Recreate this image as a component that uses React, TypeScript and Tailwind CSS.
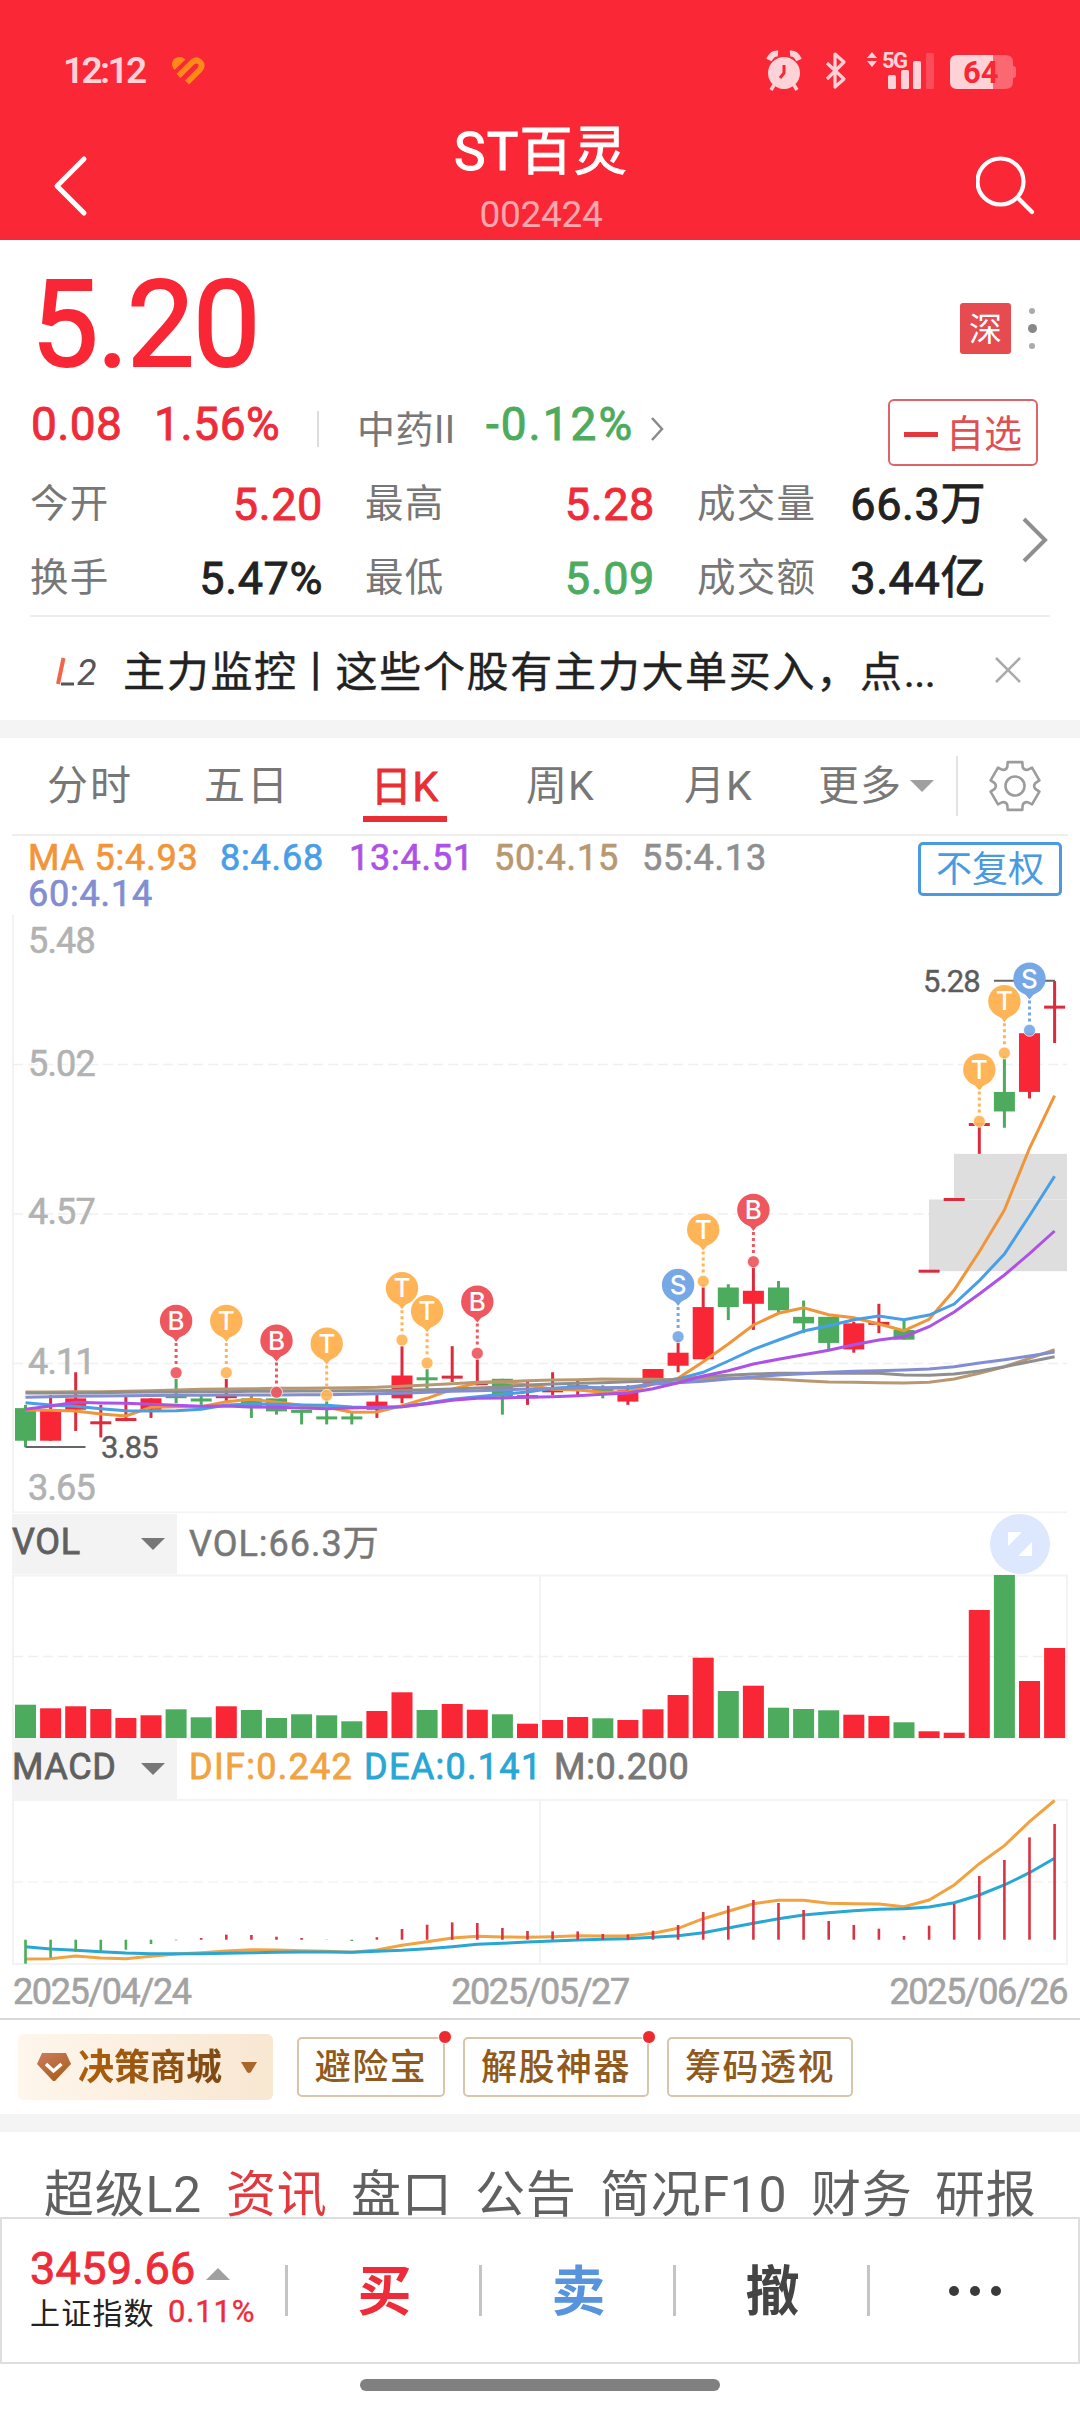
import type { ReactNode } from "react";

const UP = "#f92735";
const DOWN = "#4dab5e";

// high, body top, body bottom, low, "u" | "d"
type Candle = [number, number, number, number, "u" | "d"];

const candles: Candle[] = [
  [3.98, 3.97, 3.87, 3.85, "d"],
  [4.01, 3.965, 3.87, 3.87, "u"],
  [4.08, 4.0, 3.965, 3.9, "u"],
  [3.98, 3.925, 3.925, 3.88, "u"],
  [4.01, 3.935, 3.935, 3.93, "u"],
  [4.0, 4.0, 3.965, 3.94, "u"],
  [4.06, 4.005, 4.005, 3.985, "d"],
  [4.01, 3.995, 3.995, 3.98, "d"],
  [4.06, 4.005, 4.005, 3.99, "u"],
  [4.01, 4.0, 3.97, 3.94, "d"],
  [4.0, 4.0, 3.96, 3.95, "d"],
  [3.965, 3.96, 3.96, 3.92, "d"],
  [4.0, 3.94, 3.94, 3.92, "d"],
  [3.955, 3.94, 3.94, 3.92, "d"],
  [4.01, 3.99, 3.965, 3.94, "u"],
  [4.16, 4.07, 4.0, 3.985, "u"],
  [4.09, 4.06, 4.06, 4.03, "d"],
  [4.16, 4.065, 4.065, 4.05, "u"],
  [4.12, 4.045, 4.045, 4.04, "u"],
  [4.06, 4.06, 4.005, 3.95, "d"],
  [4.05, 4.005, 4.005, 3.98, "u"],
  [4.08, 4.023, 4.023, 4.01, "u"],
  [4.055, 4.04, 4.03, 4.01, "u"],
  [4.04, 4.03, 4.02, 4.0, "d"],
  [4.04, 4.025, 3.99, 3.98, "u"],
  [4.09, 4.09, 4.045, 4.045, "u"],
  [4.18, 4.14, 4.1, 4.08, "u"],
  [4.35, 4.28, 4.12, 4.12, "u"],
  [4.35, 4.34, 4.28, 4.24, "d"],
  [4.405, 4.33, 4.29, 4.21, "u"],
  [4.36, 4.34, 4.27, 4.26, "d"],
  [4.3, 4.25, 4.23, 4.2, "d"],
  [4.25, 4.25, 4.17, 4.15, "d"],
  [4.235, 4.23, 4.15, 4.14, "u"],
  [4.29, 4.23, 4.23, 4.2, "u"],
  [4.24, 4.21, 4.18, 4.18, "d"],
  [4.39, 4.39, 4.39, 4.39, "u"],
  [4.61, 4.61, 4.61, 4.61, "u"],
  [4.84, 4.84, 4.84, 4.75, "u"],
  [5.05, 4.94, 4.88, 4.83, "d"],
  [5.12, 5.12, 4.94, 4.92, "u"],
  [5.28, 5.2, 5.2, 5.09, "u"],
];

const volumes = [
  33.3, 29.7, 31.7, 29, 20, 22.7, 28.7, 20.7, 31.7, 28, 20, 23.7, 22.7, 16.7, 27, 45.7, 28, 34, 28.3, 23.7, 14.3, 18,
  21, 19.7, 18, 28.7, 43, 80.3, 47, 52.3, 30.3, 29, 27.7, 23.3, 22, 15.7, 6.7, 5.3, 128, 163, 57, 90,
];

const macdBars = [
  -24, -18, -12, -12, -10, -4.3, -0.7, 1.7, 5, 4.7, 3, 1.7, -0.3, -1.3, 2.5, 10.7, 15, 17.3, 16.7, 11.7, 8.7, 8.3, 8.3,
  5.7, 5.3, 9, 14.7, 27.7, 34, 39.7, 36.7, 29.7, 18.7, 14.7, 11, 3.7, 14, 35.7, 63.7, 79.7, 102.3, 115.7,
];

const ma5 = [
  510, 510.3, 511, 514, 516, 507.3, 506.7, 506.7, 501.7, 499.3, 502.3, 505.3, 507.3, 512.3, 512, 505.7, 498.3, 489.3,
  482.7, 481.7, 485, 489.3, 490, 492.3, 491.7, 484, 478.3, 461.7, 444, 425, 413.3, 407.7, 414.7, 417.7, 424, 430.7,
  419.3, 390, 351.7, 310, 248.3, 195.7,
];
const ma8 = [
  502.7, 505, 506.3, 508.7, 510.7, 511, 510.7, 509.3, 505, 504, 504.3, 505, 505.3, 507, 507.7, 506.7, 503.3, 499.3,
  496.7, 494.3, 492, 488.3, 486.7, 488, 488.3, 484, 479, 472.3, 461, 449.3, 440, 431, 425.7, 419.7, 416, 419.7, 415,
  404, 380.7, 354, 315.7, 276.3,
];
const ma13 = [
  509.3, 506, 502.3, 503, 503.3, 504.3, 505.3, 506.3, 506, 507, 507.3, 508, 508.7, 508, 507.3, 506.7, 503.7, 500.3,
  498.3, 498, 497.3, 496.7, 495.7, 494.3, 493, 488.7, 482.7, 476, 470.7, 464, 459.3, 454.7, 450.3, 444.7, 440, 436.7,
  426.7, 412, 394, 375, 353.7, 331,
];
const ma50 = [
  492, 492, 491.7, 491.7, 491.3, 490.7, 490, 489.3, 489, 488.7, 488.3, 488.3, 488, 487.7, 487.3, 486.3, 485, 483.7,
  482.3, 481.7, 480.7, 480, 479.7, 479, 479.3, 479.3, 480, 479, 478, 478.3, 479.3, 480.7, 482, 482.3, 482.7, 483, 482.3,
  479, 473.3, 466.7, 458.3, 449.7,
];
const ma55 = [
  493, 493, 493, 492.7, 492.3, 492, 492, 491.7, 491.7, 491.3, 491.3, 491, 491, 490.7, 490.7, 490.3, 489.7, 489, 488,
  487, 485, 484, 483.3, 482.7, 481.7, 481, 479.3, 476.7, 475.3, 474, 473.3, 473.3, 473.3, 473.3, 473.3, 475, 475.3, 474,
  471, 466.7, 461.7, 456.7,
];
const ma60 = [
  497.3, 496.7, 496.3, 496, 495.7, 495.5, 495.3, 495.3, 495, 495, 495, 494.7, 494.7, 494.3, 493.7, 493.3, 492.3, 491.3,
  490.7, 490, 489, 488.7, 488, 487.7, 487.3, 484, 482.7, 481.3, 479, 477, 475, 473.7, 472.3, 471.3, 470.7, 470, 469,
  466.7, 463, 459.7, 456, 452,
];
const dif = [
  159, 158.7, 156, 158, 158.7, 156.3, 154, 152.7, 151, 149.7, 150, 150.7, 151.3, 152.3, 150, 145.3, 141.7, 138, 136.3,
  137, 137.3, 136.7, 135.7, 136, 136, 133.3, 128.3, 118.7, 111.3, 103.7, 100.3, 100.3, 103.3, 103.7, 104, 106.7, 100,
  85, 63.7, 45.7, 21.7, 0.5,
];
const dea = [
  146.7, 149, 150.3, 151.7, 153, 153.7, 153.7, 153.7, 153.3, 152.7, 152.3, 152, 152, 152.3, 151.3, 150.3, 148.7, 146.7,
  144.3, 143.3, 142, 141, 140, 139.3, 138.7, 137.3, 135.7, 132.7, 128, 123.3, 118.7, 115, 112.7, 110.7, 109.3, 108.7,
  107, 102.7, 95, 85, 72.7, 58.3,
];

const pinColors = { B: "#ee575e", T: "#ffb557", S: "#76a8e6" };
const pins: [number, number, "B" | "T" | "S"][] = [
  [6, 472.7, "B"],
  [8, 472.7, "T"],
  [10, 492.3, "B"],
  [12, 495.3, "T"],
  [15, 440, "T"],
  [16, 463, "T"],
  [18, 453.3, "B"],
  [26, 436.7, "S"],
  [27, 381.3, "T"],
  [29, 361.7, "B"],
  [38, 221.3, "T"],
  [39, 153, "T"],
  [40, 130.3, "S"],
];

const xAt = (i: number) => 25.5 + i * 25.1;
const yAt = (price: number) => 463.3 - (price - 4.1075) * 326;
const points = (ys: number[]) => ys.map((y, i) => `${xAt(i).toFixed(1)},${y}`).join(" ");

function Pin({ i, y, kind }: { i: number; y: number; kind: "B" | "T" | "S" }) {
  const color = pinColors[kind];
  const x = xAt(i);
  const cy = y - 51.7;
  return (
    <g>
      <line x1={x} x2={x} y1={cy + 22} y2={y - 6} stroke={color} strokeWidth="3" strokeDasharray="3 3" />
      <circle cx={x} cy={y} r="6" fill={color} fillOpacity="0.92" stroke="#fff" strokeOpacity="0.7" />
      <path
        d={`M${x - 8} ${cy + 13.5} Q${x - 3} ${cy + 16} ${x} ${cy + 21} Q${x + 3} ${cy + 16} ${x + 8} ${cy + 13.5}Z`}
        fill={color}
      />
      <circle cx={x} cy={cy} r="16.2" fill={color} />
      <text x={x} y={cy + 9} textAnchor="middle" fontSize="26" fontWeight="500" fill="#fff" className="font-['Inter']">
        {kind}
      </text>
    </g>
  );
}

function PriceChart() {
  const axis: [string, number][] = [
    ["5.48", 53],
    ["5.02", 176],
    ["4.57", 324],
    ["4.11", 474],
    ["3.65", 600],
  ];
  const lines: [number[], string][] = [
    [ma5, "#f1953a"],
    [ma50, "#b89871"],
    [ma8, "#489fe8"],
    [ma55, "#8f8f8f"],
    [ma60, "#828dd2"],
    [ma13, "#ad52e6"],
  ];
  return (
    <svg viewBox="0 13 1080 600" className="block h-[600px] w-full font-['Roboto']">
      <path d="M13 15V613M12 612.5H1067" stroke="#f3f3f3" strokeWidth="2" fill="none" />
      {[164.5, 314, 463.5].map((y) => (
        <path key={y} d={`M13 ${y}H1067`} stroke="#f0f0f0" strokeWidth="1.5" strokeDasharray="10 5" />
      ))}
      <rect x="929" y={yAt(4.61)} width="138" height={yAt(4.39) - yAt(4.61)} fill="#dedede" />
      <rect x="954" y={yAt(4.75)} width="113" height={yAt(4.61) - yAt(4.75)} fill="#dedede" />
      <path d={`M954 ${yAt(4.61)}H1067`} stroke="#e8e8e8" />
      {axis.map(([label, y]) => (
        <text key={label} x="28" y={y - 0.5} fontSize="36" letterSpacing="-0.8" fill="#b2b2b2" stroke="#b2b2b2" strokeWidth="0.6">
          {label}
        </text>
      ))}
      {candles.map(([h, t, b, l, dir], i) => {
        const color = dir === "u" ? UP : DOWN;
        const flat = t === b;
        const top = flat ? yAt(t) - 1.5 : yAt(t);
        const height = flat ? 3 : yAt(b) - yAt(t);
        return (
          <g key={i} fill={color}>
            <rect x={xAt(i) - 1.5} y={yAt(h)} width="3" height={yAt(l) - yAt(h)} fill={dir === "u" ? "#dc2b3c" : color} />
            <rect x={xAt(i) - 10.5} y={top} width="21" height={height} fill={flat && dir === "u" ? "#dc2b3c" : color} />
          </g>
        );
      })}
      {lines.map(([ys, color]) => (
        <polyline key={color} points={points(ys)} fill="none" stroke={color} strokeWidth="3" />
      ))}
      <path d="M25.5 547H85.5M994 80.7H1055" stroke="#666" strokeWidth="2" />
      <g fontSize="31" fill="#5c5c5c" stroke="#5c5c5c" strokeWidth="0.4">
        <text x="101" y="557.5" letterSpacing="-0.9">3.85</text>
        <text x="923" y="92" letterSpacing="-0.9">5.28</text>
      </g>
      {pins.map(([i, y, kind]) => (
        <Pin key={i} i={i} y={y} kind={kind} />
      ))}
    </svg>
  );
}

function VolumeChart() {
  return (
    <svg viewBox="0 -1 1080 164" className="block h-[164px] w-full overflow-visible">
      <path d="M13 0.5H1067V163.5H13ZM540 0V164" stroke="#f3f3f3" strokeWidth="2" fill="none" />
      <path d="M13 81.5H1067" stroke="#f0f0f0" strokeWidth="1.5" strokeDasharray="10 5" />
      {volumes.map((v, i) => (
        <rect key={i} x={xAt(i) - 10.5} y={163 - v} width="21" height={v} fill={candles[i][4] === "u" ? UP : DOWN} />
      ))}
    </svg>
  );
}

function MacdChart() {
  return (
    <svg viewBox="0 -1 1080 166" className="block h-[166px] w-full">
      <path d="M13 0H1067V164H13ZM540 0V164" stroke="#f3f3f3" strokeWidth="2" fill="none" />
      <path d="M13 82H1067" stroke="#f3f3f3" strokeWidth="1.5" strokeDasharray="10 5" />
      <polyline points={points(dif)} fill="none" stroke="#f0a340" strokeWidth="3" />
      <polyline points={points(dea)} fill="none" stroke="#28a6d4" strokeWidth="3" />
      {macdBars.map((v, i) => (
        <rect
          key={i}
          x={xAt(i) - 1.3}
          y={v > 0 ? 139.7 - v : 139.7}
          width="2.6"
          height={Math.abs(v)}
          fill={v > 0 ? "#d83444" : DOWN}
        />
      ))}
    </svg>
  );
}

function Gear() {
  const pt = (r: number, deg: number) => {
    const a = ((deg - 90) * Math.PI) / 180;
    return `${(27 + r * Math.cos(a)).toFixed(1)} ${(27 + r * Math.sin(a)).toFixed(1)}`;
  };
  const d = [0, 60, 120, 180, 240, 300]
    .map((a) => `${a ? "L" : "M"}${pt(25, a - 17)}L${pt(25, a + 17)}L${pt(20.5, a + 22)}Q${pt(18, a + 30)} ${pt(20.5, a + 38)}`)
    .join("");
  return (
    <svg viewBox="0 0 54 54" className="h-[54px] w-[54px]" fill="none" stroke="#9c9c9c" strokeWidth="2.6">
      <path d={`${d}Z`} strokeLinejoin="round" />
      <circle cx="27" cy="27" r="9.5" />
    </svg>
  );
}

function StatusBar() {
  return (
    <div className="flex h-[140px] items-center text-[#fed2d6]">
      <span className="ml-[63px] w-[108px] text-[37px] font-semibold tracking-[-2.6px]">12:12</span>
      <svg viewBox="0 0 34 29" className="h-[29px] w-[34px]" fill="none" stroke="#ff8a17">
        <path d="M3.500 14Q-1.500 8 3 3Q9 -1 14.500 3.500Z" fill="#ff8a17" stroke="none" />
        <path d="M7.500 20L21 6.500Q25.500 2.500 29 6T28.500 14L16 26.500" strokeWidth="5.800" />
      </svg>
      <svg viewBox="0 0 280 44" className="ml-[553px] h-[44px] w-[280px] text-[22px] font-medium" fill="currentColor">
        <circle cx="26" cy="25" r="16" />
        <path d="M11 12Q14 5 20 5.500M41 12Q38 5 32 5.500" stroke="currentColor" strokeWidth="6" fill="none" />
        <path d="M16 37L13 42M36 37L39 42" stroke="currentColor" strokeWidth="3.500" />
        <path d="M26 17V25L22 30" stroke={UP} strokeWidth="3" fill="none" />
        <path d="M69 15L86 31L77 39V6L86 14L69 31" stroke="currentColor" strokeWidth="3.200" fill="none" strokeLinejoin="round" />
        <path d="M114 4L119 10H109ZM114 19L119 13H109Z" />
        <text x="124" y="19.500" className="font-bold tracking-[-1.5px]">5G</text>
        <rect x="130" y="27" width="8" height="14" rx="1.500" />
        <rect x="143" y="22" width="8" height="19" rx="1.500" />
        <rect x="155" y="13" width="8" height="28" rx="1.500" />
        <rect x="168" y="5" width="8" height="36" rx="1.500" opacity="0.22" />
        <path d="M199 7H235V41H199Q192 41 192 34V14Q192 7 199 7Z" />
        <path d="M235 7H247Q255 7 255 14V18Q258 18 258 21V27Q258 30 255 30V34Q255 41 247 41H235Z" opacity="0.38" />
        <text x="205" y="35" fontSize="31" fill={UP} className="font-bold">64</text>
      </svg>
    </div>
  );
}

function Header() {
  return (
    <header className="h-[240px] bg-[#fa2736]">
      <StatusBar />
      <div className="-mt-[16px] flex h-[116px] justify-between text-white">
        <svg viewBox="0 0 60 80" className="ml-[38px] mt-[21px] h-[80px] w-[60px]" fill="none" stroke="currentColor" strokeWidth="5">
          <path d="M46 14L19 41L46 68" strokeLinecap="round" strokeLinejoin="round" />
        </svg>
        <div className="ml-[8px] flex flex-col items-center">
          <h1 className="mt-[2px] text-[53px] tracking-[1.2px] [-webkit-text-stroke:1px]">ST百灵</h1>
          <span className="mt-[17px] text-[37px] tracking-[-0.3px] text-white/60">002424</span>
        </div>
        <svg viewBox="0 0 64 64" className="mr-[40px] mt-[30px] h-[64px] w-[64px]" fill="none" stroke="currentColor" strokeWidth="4.200">
          <circle cx="24.500" cy="27.500" r="23" />
          <path d="M42 44L56 58" strokeLinecap="round" />
        </svg>
      </div>
    </header>
  );
}

function Stat({ label, value, color }: { label: string; value: string; color: string }) {
  return (
    <div className="flex items-center justify-between">
      <span className="text-[38.5px] tracking-[1.2px] text-[#777]">{label}</span>
      <span className={`text-[45px] tracking-[0.6px] [-webkit-text-stroke:0.9px] ${color}`}>{value}</span>
    </div>
  );
}

function Quote() {
  return (
    <section className="h-[377px]">
      <div className="flex h-[152px] items-center justify-between pt-[16px]">
        <span className="ml-[31px] mt-px text-[120px] tracking-[-1.500px] text-[#f92735] [-webkit-text-stroke:2px]">5.20</span>
        <div className="mr-[43px] mt-[8px] flex items-center gap-[16px]">
          <span className="flex h-[51px] w-[51px] items-center justify-center rounded-[3px] bg-[#e64b50] pt-[2px] text-[33px] text-white">
            深
          </span>
          <div className="flex w-[10px] flex-col items-center gap-[10px]">
            <i className="h-[6px] w-[6px] rounded-full bg-[#aaa]" />
            <i className="h-[9px] w-[9px] rounded-full bg-[#888]" />
            <i className="h-[6px] w-[6px] rounded-full bg-[#aaa]" />
          </div>
        </div>
      </div>
      <div className="mb-[12px] flex h-[64px] items-center">
        <span className="ml-[31px] w-[123px] text-[46px] tracking-[0.4px] text-[#ee2c39] [-webkit-text-stroke:0.9px]">0.08</span>
        <span className="w-[163px] text-[46px] tracking-[0.6px] text-[#ee2c39] [-webkit-text-stroke:0.9px]">1.56%</span>
        <i className="mt-[10px] h-[36px] w-[2px] bg-[#ddd]" />
        <span className="ml-[38px] mt-[12px] w-[129px] text-[38px] tracking-[0.5px] text-[#777]">中药II</span>
        <span className="w-[163px] text-[46px] tracking-[2px] text-[#4dab5e] [-webkit-text-stroke:0.9px]">-0.12%</span>
        <svg viewBox="0 0 16 26" className="mt-[10px] h-[26px] w-[16px]" fill="none" stroke="#8a8a8a" strokeWidth="2.500">
          <path d="M3 2L13 13L3 24" />
        </svg>
        <button className="-mb-[16px] ml-[223px] flex h-[67px] w-[150px] items-center justify-center gap-[8px] rounded-[6px] border-2 border-[#dd6468] text-[38px] text-[#e04f53]">
          <i className="mt-[4px] h-[5px] w-[34px] bg-[#e5383e]" />
          <span className="mt-[3px]">自选</span>
        </button>
      </div>
      <div className="mx-[30px] flex h-[149px] border-b-2 border-[#eee]">
        <div className="grid h-[147px] grid-cols-[293px_290px_289px] grid-rows-[73px_74px] gap-x-[42px]">
          <Stat label="今开" value="5.20" color="text-[#ee2c39]" />
          <Stat label="最高" value="5.28" color="text-[#ee2c39]" />
          <Stat label="成交量" value="66.3万" color="text-[#222]" />
          <Stat label="换手" value="5.47%" color="text-[#222]" />
          <Stat label="最低" value="5.09" color="text-[#4dab5e]" />
          <Stat label="成交额" value="3.44亿" color="text-[#222]" />
        </div>
        <svg viewBox="0 0 28 48" className="ml-[35px] mt-[48px] h-[48px] w-[28px]" fill="none" stroke="#8f8f8f" strokeWidth="4">
          <path d="M3 3L24 24L3 45" />
        </svg>
      </div>
    </section>
  );
}

function Banner() {
  return (
    <div className="flex h-[103px] items-center pt-[6px]">
      <svg viewBox="0 0 48 30" className="ml-[55px] h-[30px] w-[48px] overflow-visible text-[36px]" fill="none">
        <path d="M8.500 1L3 27" stroke="#f2654a" strokeWidth="4" />
        <path d="M6 27H19" stroke="#555" strokeWidth="3" />
        <text x="22" y="28" fill="#555" className="italic">2</text>
      </svg>
      <p className="ml-[20px] mt-[2px] w-[840px] text-[42px] tracking-[1.7px] text-[#222] [-webkit-text-stroke:0.4px]">
        主力监控<span className="-mx-[3px]">丨</span>这些个股有主力大单买入，点<span className="tracking-[-0.5px]">...</span>
      </p>
      <svg viewBox="0 0 28 28" className="ml-[31px] mt-[-4px] h-[28px] w-[28px]" stroke="#aaa" strokeWidth="2.500">
        <path d="M2 2L26 26M26 2L2 26" />
      </svg>
    </div>
  );
}

function PeriodTabs() {
  return (
    <nav className="mx-[12px] flex h-[98px] items-center border-b-2 border-[#eee] text-[41px] text-[#777]">
      <span className="ml-[35px] w-[157px] tracking-[2px]">分时</span>
      <span className="w-[159px] tracking-[2px]">五日</span>
      <span className="flex h-full w-[84px] flex-col items-center justify-end pb-[12px] text-[#e72f34]">
        <span className="mb-[8px] tracking-[1px] [-webkit-text-stroke:0.9px]">日K</span>
        <i className="h-[6px] w-full bg-[#e92e33]" />
      </span>
      <span className="ml-[79px] w-[158px] tracking-[1px]">周K</span>
      <span className="w-[134px] tracking-[1px]">月K</span>
      <span className="tracking-[1px]">更多</span>
      <svg viewBox="0 0 24 12" className="ml-[8px] h-[12px] w-[24px]" fill="#a0a0a0">
        <path d="M0 0H24L12 12Z" />
      </svg>
      <i className="ml-auto h-[60px] w-[2px] bg-[#e4e4e4]" />
      <div className="ml-[30px] mr-[26px]">
        <Gear />
      </div>
    </nav>
  );
}

function MaLegend() {
  return (
    <div className="flex h-[77px] justify-between pl-[28px] pr-[18px] pt-[2px]">
      <div className="pt-[2px] text-[36px] leading-[36px] tracking-[0.8px] [-webkit-text-stroke:0.7px]">
        <div className="flex">
          <span className="w-[192px] text-[#f1953a]">MA 5:4.93</span>
          <span className="w-[129px] text-[#489fe8]">8:4.68</span>
          <span className="w-[145px] text-[#ad52e6]">13:4.51</span>
          <span className="w-[148px] text-[#b89871]">50:4.15</span>
          <span className="text-[#8f8f8f]">55:4.13</span>
        </div>
        <div className="text-[#828dd2]">60:4.14</div>
      </div>
      <button className="mt-[4px] flex h-[54px] w-[144px] items-center justify-center rounded-[5px] border-3 border-[#4a9ae2] pt-[2px] text-[36px] text-[#4a9ae2]">
        不复权
      </button>
    </div>
  );
}

function PanelHead({ name, children }: { name: string; children: ReactNode }) {
  return (
    <div className="flex h-[61px] items-center text-[36px] text-[#777]">
      <div className="ml-[12px] flex h-[60px] w-[165px] items-center justify-between bg-[#f3f3f3] pr-[12px] text-[#606060]">
        <span className="-mt-[3px] tracking-[0.6px] [-webkit-text-stroke:0.8px]">{name}</span>
        <svg viewBox="0 0 24 12" className="h-[12px] w-[24px]" fill="#777">
          <path d="M0 0H24L12 12Z" />
        </svg>
      </div>
      {children}
    </div>
  );
}

function Chips() {
  const chips = [
    { label: "避险宝", width: "w-[148px]", dot: true },
    { label: "解股神器", width: "w-[186px]", dot: true },
    { label: "筹码透视", width: "w-[186px]", dot: false },
  ];
  return (
    <div className="flex h-[96px] items-center border-t-2 border-[#d8d8d8] pb-[1px] text-[36px] text-[#8f5a1c]">
      <div className="ml-[18px] flex h-[66px] w-[255px] items-center rounded-[6px] bg-linear-to-r from-[#fef6ec] to-[#f8e7d1]">
        <svg viewBox="0 0 36 30" className="ml-[18px] h-[30px] w-[36px]">
          <defs>
            <linearGradient id="gem" x1="0" y1="0" x2="0.6" y2="1">
              <stop offset="0" stopColor="#cf7a5e" />
              <stop offset="1" stopColor="#a9601c" />
            </linearGradient>
          </defs>
          <path d="M6 1H30L35 12L19 29H17L1 12Z" fill="url(#gem)" />
          <path d="M10 12L17.500 19L25.500 12" fill="none" stroke="#fff" strokeWidth="3.500" />
        </svg>
        <span className="ml-[6px] mt-[2px] bg-linear-to-r from-[#b05f0a] to-[#7d4a14] bg-clip-text font-bold leading-[46px] text-transparent">
          决策商城
        </span>
        <svg viewBox="0 0 16 12" className="ml-[19px] mt-[2px] h-[12px] w-[16px]" fill="#a9682a">
          <path d="M0 0H16L10 10Q8 12 6 10Z" />
        </svg>
      </div>
      <div className="ml-[24px] flex gap-[18px]">
        {chips.map((chip) => (
          <div
            key={chip.label}
            className={`relative flex h-[60px] items-center justify-center rounded-[5px] border-2 border-[#d9c5ab] pt-[2px] font-medium tracking-[1.5px] ${chip.width}`}
          >
            {chip.label}
            {chip.dot && <i className="absolute -right-[9px] -top-[9px] h-[14px] w-[14px] rounded-full border border-white bg-[#ec2b30]" />}
          </div>
        ))}
      </div>
    </div>
  );
}

function InfoTabs() {
  const tabs = [
    { label: "超级L2", width: "w-[182px]" },
    { label: "资讯", width: "w-[125px]", active: true },
    { label: "盘口", width: "w-[124px]" },
    { label: "公告", width: "w-[125px]" },
    { label: "简况F10", width: "w-[211px]" },
    { label: "财务", width: "w-[124px]" },
    { label: "研报", width: "w-[110px]" },
  ];
  return (
    <nav className="flex h-[85px] overflow-hidden whitespace-nowrap pl-[44px] pt-[38px] text-[50px] tracking-[0.7px] text-[#606060]">
      {tabs.map((tab) => (
        <span key={tab.label} className={`${tab.width} shrink-0 ${tab.active ? "text-[#e03a3e]" : ""}`}>
          {tab.label}
        </span>
      ))}
    </nav>
  );
}

function TradeBar() {
  const actions = [
    { label: "买", color: "text-[#ee2c39]" },
    { label: "卖", color: "text-[#5794dd]" },
    { label: "撤", color: "text-[#444]" },
  ];
  return (
    <footer className="flex h-[147px] items-center border-2 border-[#dedede]">
      <div className="-mt-[6px] ml-[28px] w-[255px]">
        <div className="flex items-center text-[45px] tracking-[0.3px] text-[#ee2c39] [-webkit-text-stroke:0.9px]">
          3459.66
          <svg viewBox="0 0 24 12" className="ml-[10px] mt-[10px] h-[12px] w-[24px]" fill="#a0a0a0">
            <path d="M0 12H24L12 0Z" />
          </svg>
        </div>
        <div className="flex items-center pt-[3px]">
          <span className="w-[138px] pt-[5px] text-[30px] tracking-[1.2px] text-[#222]">上证指数</span>
          <span className="text-[31px] tracking-[0.8px] text-[#ee2c39] [-webkit-text-stroke:0.4px]">0.11%</span>
        </div>
      </div>
      {actions.map((action) => (
        <div key={action.label} className="flex w-[194px] items-center">
          <i className="h-[51px] w-[3px] bg-[#c4c4c4]" />
          <span className={`flex-1 pl-[2px] pt-[5px] text-center text-[54px] font-bold ${action.color}`}>{action.label}</span>
        </div>
      ))}
      <i className="h-[51px] w-[3px] bg-[#c4c4c4]" />
      <div className="ml-[79px] flex gap-[11px]">
        <i className="h-[10px] w-[10px] rounded-full bg-[#3a3a3a]" />
        <i className="h-[10px] w-[10px] rounded-full bg-[#3a3a3a]" />
        <i className="h-[10px] w-[10px] rounded-full bg-[#3a3a3a]" />
      </div>
    </footer>
  );
}

export default function App() {
  return (
    <main className="h-[2412px] w-[1080px] overflow-hidden whitespace-nowrap bg-white font-['Roboto','Noto_Sans_CJK_SC',sans-serif] leading-none">
      <Header />
      <Quote />
      <Banner />
      <div className="h-[18px] bg-[#f4f4f4]" />
      <PeriodTabs />
      <MaLegend />
      <PriceChart />
      <div className="relative">
        <PanelHead name="VOL">
          <span className="ml-[12px] tracking-[1px] [-webkit-text-stroke:0.5px]">VOL:66.3万</span>
        </PanelHead>
        <svg viewBox="0 0 60 60" className="absolute right-[30px] top-[1px] h-[60px] w-[60px]">
          <circle cx="30" cy="30" r="30" fill="#dde7fd" />
          <path d="M18 18H32L18 32ZM42 28V42H28Z" fill="#fff" />
        </svg>
      </div>
      <VolumeChart />
      <PanelHead name="MACD">
        <div className="-mt-[3px] ml-[12px] flex tracking-[1.3px] [-webkit-text-stroke:0.8px]">
          <span className="w-[175px] text-[#f0a340]">DIF:0.242</span>
          <span className="w-[190px] text-[#28a6d4]">DEA:0.141</span>
          <span className="tracking-[0.7px]">M:0.200</span>
        </div>
      </PanelHead>
      <MacdChart />
      <div className="flex h-[53px] items-center justify-between px-[13px] text-[36px] tracking-[-1.4px] text-[#a3a3a3] [-webkit-text-stroke:0.6px]">
        <span>2025/04/24</span>
        <span>2025/05/27</span>
        <span>2025/06/26</span>
      </div>
      <Chips />
      <div className="h-[18px] bg-[#f4f4f4]" />
      <InfoTabs />
      <TradeBar />
      <div className="mx-auto mt-[15px] h-[12px] w-[360px] rounded-full bg-[#808080]" />
    </main>
  );
}
